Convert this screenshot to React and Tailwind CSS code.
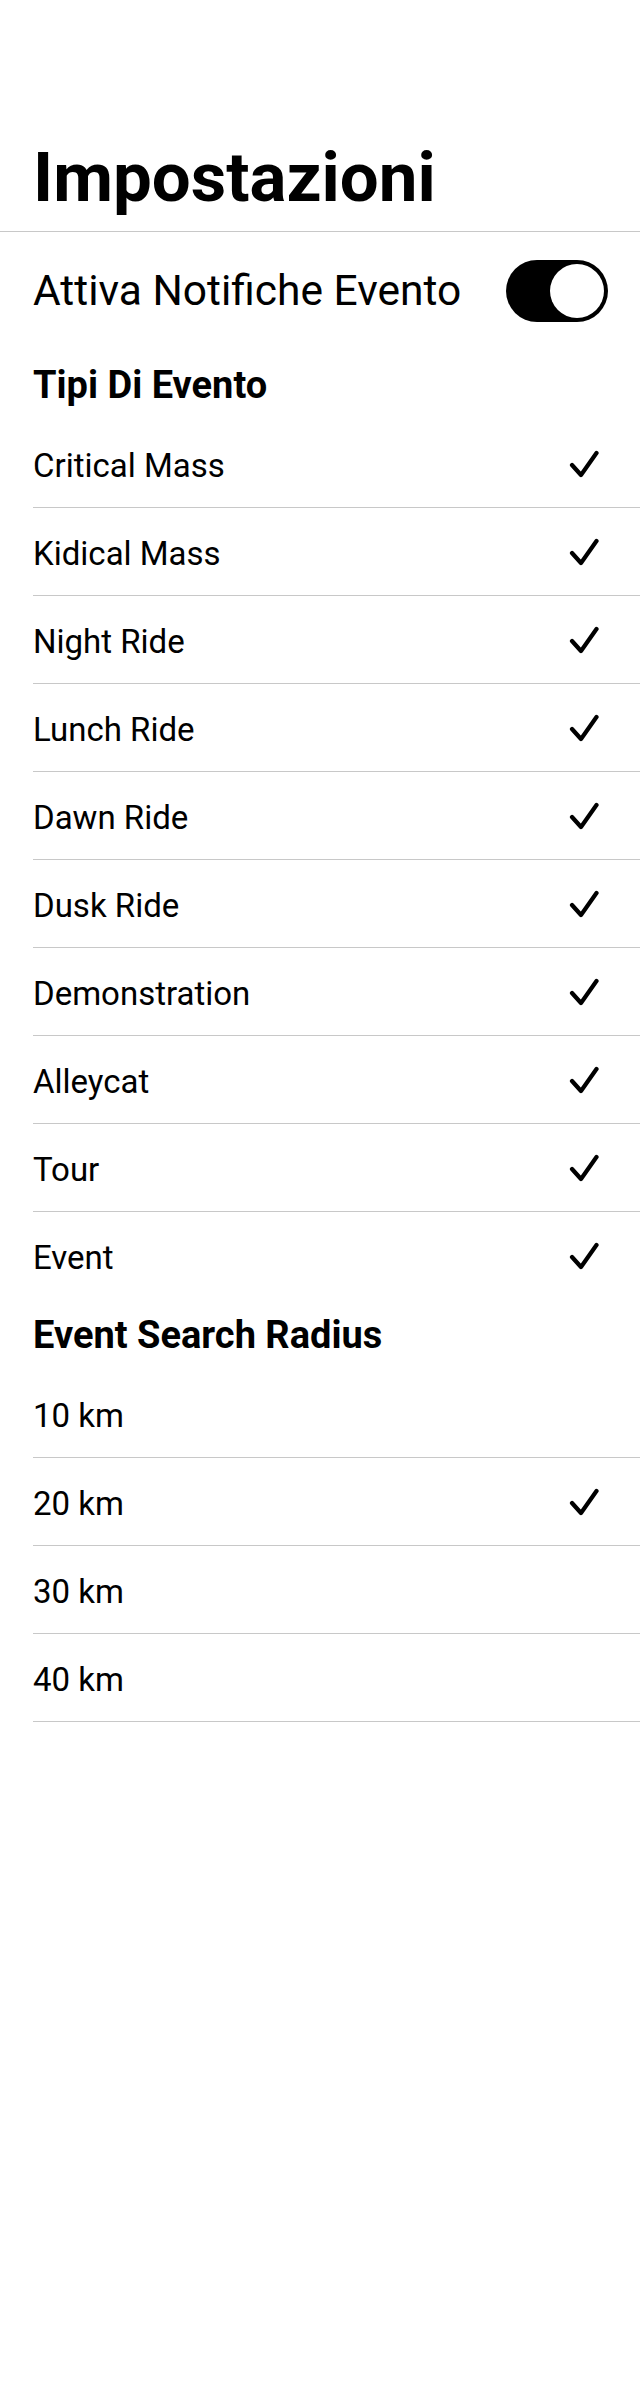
import React, { useState } from 'react';

const EVENT_TYPES = [
  'Critical Mass',
  'Kidical Mass',
  'Night Ride',
  'Lunch Ride',
  'Dawn Ride',
  'Dusk Ride',
  'Demonstration',
  'Alleycat',
  'Tour',
  'Event',
];

const RADII = [10, 20, 30, 40];

const Check = () => (
  <svg width="30" height="28" viewBox="0 0 30 28" fill="none">
    <path
      d="M3 15 L12 25 L27.5 3"
      stroke="#000"
      strokeWidth="4.2"
      strokeLinecap="round"
      strokeLinejoin="round"
    />
  </svg>
);

const SectionHeader = ({ children }) => (
  <div className="h-[70px] flex items-center text-[38px] font-bold leading-none">
    {children}
  </div>
);

const Row = ({ label, checked, divider = true, onClick }) => (
  <div
    onClick={onClick}
    className={`h-[88px] flex items-center justify-between pr-[41px] ${divider ? 'border-b border-[#c8c8c8]' : ''}`}
  >
    <span className="text-[33px] leading-none pt-[3px]">{label}</span>
    {checked && <Check />}
  </div>
);

export default function App() {
  const [enabled, setEnabled] = useState(true);
  const [types, setTypes] = useState(EVENT_TYPES);
  const [radius, setRadius] = useState(20);

  const toggleType = (t) => {
    setTypes((prev) => (prev.includes(t) ? prev.filter((x) => x !== t) : [...prev, t]));
  };

  return (
    <div className="min-h-[2400px] bg-white text-black font-['Roboto','Liberation_Sans',sans-serif]">
      {/* Large title */}
      <div className="pt-[144px] pb-[19px] px-[33px]">
        <h1 className="text-[69px] font-bold leading-[68px]">Impostazioni</h1>
      </div>
      <div className="h-px bg-[#c8c8c8]" />

      <div className="pl-[33px]">
        <div className="h-[118px] flex items-center justify-between pr-[32px]">
          <span className="text-[42.5px] leading-none">Attiva Notifiche Evento</span>
          <button
            onClick={() => setEnabled(!enabled)}
            className={`w-[102px] h-[62px] rounded-full p-[4px] flex ${enabled ? 'bg-black justify-end' : 'bg-[#e5e5ea] justify-start'}`}
          >
            <span className="w-[54px] h-[54px] rounded-full bg-white block" />
          </button>
        </div>

        <SectionHeader>Tipi Di Evento</SectionHeader>
        {EVENT_TYPES.map((t, i) => (
          <Row
            key={t}
            label={t}
            checked={types.includes(t)}
            divider={i < EVENT_TYPES.length - 1}
            onClick={() => toggleType(t)}
          />
        ))}

        <SectionHeader>Event Search Radius</SectionHeader>
        {RADII.map((r) => (
          <Row
            key={r}
            label={`${r} km`}
            checked={radius === r}
            onClick={() => setRadius(r)}
          />
        ))}
      </div>
    </div>
  );
}
